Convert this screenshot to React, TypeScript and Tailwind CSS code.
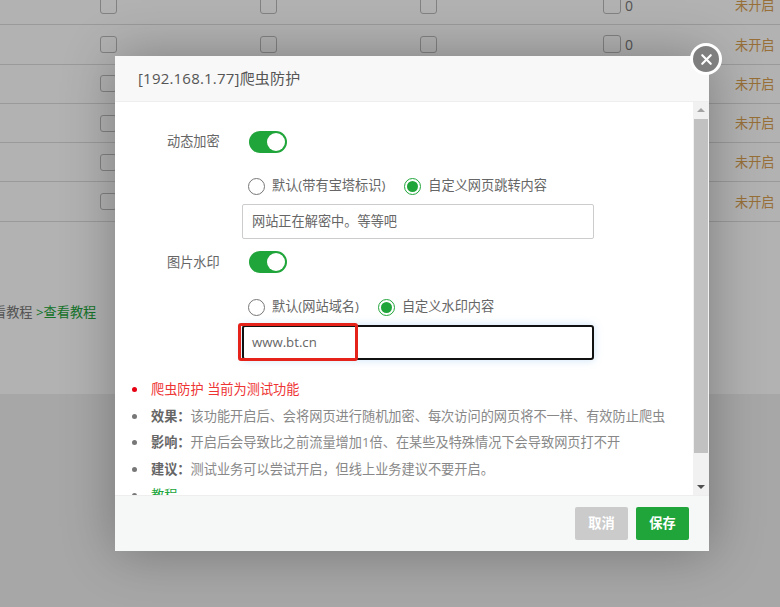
import React from 'react';
import { X } from 'lucide-react';

const rows = [0, 1, 2, 3, 4, 5];

const Box = () => <span className="block w-[17px] h-[17px] border border-[#bbb] rounded-[3px] bg-white" />;

const Toggle = () => (
  <span className="flex items-center justify-end w-[38px] h-[22px] rounded-full bg-[#20a53a] pr-[2px]">
    <span className="block w-[18px] h-[18px] rounded-full bg-white" />
  </span>
);

const Radio = ({ on, label }: { on?: boolean; label: string }) => (
  <span className="flex items-center gap-[7px]">
    {on ? (
      <span className="flex items-center justify-center w-[17px] h-[17px] rounded-full border border-[#20a53a] bg-white">
        <span className="block w-[11px] h-[11px] rounded-full bg-[#20a53a]" />
      </span>
    ) : (
      <span className="block w-[17px] h-[17px] rounded-full border border-[#777] bg-white" />
    )}
    <span>{label}</span>
  </span>
);

const Item = ({ bullet = 'bg-[#777]', children }: { bullet?: string; children: React.ReactNode }) => (
  <li className="relative h-[26.5px] leading-[26.5px] pl-[36px] whitespace-nowrap">
    <span className={`absolute left-[17px] top-[11px] w-[5px] h-[5px] rounded-full ${bullet}`} />
    {children}
  </li>
);

export default function App() {
  return (
    <div
      className="relative w-[780px] h-[607px] overflow-hidden bg-[#f0f0f0] text-[13.2px] text-[#666]"
      style={{ fontFamily: '"Open Sans", "Noto Sans CJK SC", sans-serif' }}
    >
      <div className="h-[394px] bg-white overflow-hidden">
        <div className="-mt-[14px]">
          {rows.map((r) => (
            <div key={r} className="flex items-center h-[39.3px] border-b border-[#ddd]">
              <div className="w-[100px]" />
              <div className="w-[160px]"><Box /></div>
              <div className="w-[160px]"><Box /></div>
              <div className="w-[183px]"><Box /></div>
              <div className="flex items-center gap-[4px] w-[132px]">
                <span className="block w-[18px] h-[18px] border border-[#bbb] rounded-[3px] bg-white" />
                <span className="text-[#777] text-[14px]">0</span>
              </div>
              <span className="text-[#d9a050] whitespace-nowrap relative top-[1px]">未开启</span>
            </div>
          ))}
        </div>
        <p className="mt-[81px] -ml-[7px] whitespace-nowrap text-[#777]">
          看教程 <span className="text-[#20a53a]">&gt;查看教程</span>
        </p>
      </div>

      {/* layer mask */}
      <div className="absolute inset-0 bg-black/30" />

      {/* dialog */}
      <div className="absolute left-[115px] top-[56px] w-[594px] h-[495px] flex flex-col bg-white shadow-[1px_1px_50px_rgba(0,0,0,0.3)]">
        <div className="h-[46px] shrink-0 flex items-center pl-[23px] text-[15px] tracking-[0.2px] text-[#555] bg-[#f8f8f8] border-b border-[#eee]">
          [192.168.1.77]爬虫防护
        </div>

        <div className="flex-1 flex min-h-0">
          <div className="flex-1 overflow-hidden relative">
            <div className="pt-[29px] pl-[52px]">
              <div className="flex items-center h-[22px]">
                <span className="w-[82px]">动态加密</span>
                <Toggle />
              </div>
              <div className="flex items-center gap-[19px] mt-[24px] ml-[81px] h-[18px]">
                <Radio label="默认(带有宝塔标识)" />
                <Radio on label="自定义网页跳转内容" />
              </div>
              <div className="flex items-center w-[352px] h-[35px] ml-[75px] mt-[9px] pl-[9px] rounded-[2px] border border-[#ccc]">
                网站正在解密中。等等吧
              </div>
              <div className="flex items-center h-[22px] mt-[12px]">
                <span className="w-[82px] pt-[2px]">图片水印</span>
                <Toggle />
              </div>
              <div className="flex items-center gap-[19px] mt-[25px] ml-[81px] h-[18px]">
                <Radio label="默认(网站域名)" />
                <Radio on label="自定义水印内容" />
              </div>
              <div className="relative w-[352px] h-[35px] ml-[75px] mt-[9px] pl-[8px] flex items-center rounded-[3px] border-2 border-[#111] shadow-[0_0_8px_rgba(102,175,233,0.35)]">
                www.bt.cn
                <span className="absolute -left-[6px] -top-[4px] w-[120px] h-[38px] rounded-[3px] border-[3px] border-[#e5231b]" />
              </div>
            </div>
            <ul className="mt-[16px] text-[#888]">
              <Item bullet="bg-[#e60012]"><span className="text-[#ee3333]">爬虫防护 当前为测试功能</span></Item>
              <Item><b className="font-bold text-[#666]">效果：</b>该功能开启后、会将网页进行随机加密、每次访问的网页将不一样、有效防止爬虫</Item>
              <Item><b className="font-bold text-[#666]">影响：</b>开启后会导致比之前流量增加1倍、在某些及特殊情况下会导致网页打不开</Item>
              <Item><b className="font-bold text-[#666]">建议：</b>测试业务可以尝试开启，但线上业务建议不要开启。</Item>
              <Item><span className="text-[#20a53a]">教程</span></Item>
            </ul>
          </div>

          {/* scrollbar */}
          <div className="w-[16px] shrink-0 flex flex-col items-center bg-[#f1f1f1]">
            <svg width="16" height="17" viewBox="0 0 16 17" className="shrink-0"><path d="M8 6l4 4H4z" fill="#a3a3a3" /></svg>
            <div className="w-[14px] h-[334px] bg-[#c1c1c1] shrink-0" />
            <div className="flex-1" />
            <svg width="16" height="17" viewBox="0 0 16 17" className="shrink-0"><path d="M8 11L4 7h8z" fill="#505050" /></svg>
          </div>
        </div>

        <div className="h-[56px] shrink-0 flex items-center justify-end gap-[8px] pr-[20px] bg-[#f6f8f8] border-t border-[#eee]">
          <button className="w-[53px] h-[33px] rounded-[2px] bg-[#cbcbcb] text-white font-bold">取消</button>
          <button className="w-[53px] h-[33px] rounded-[2px] bg-[#20a53a] text-white font-bold">保存</button>
        </div>

        <button className="absolute -right-[13px] -top-[13px] flex items-center justify-center w-[32px] h-[32px] rounded-full border-[3px] border-white bg-[#7f7f7f] text-white">
          <X size={17} strokeWidth={3} />
        </button>
      </div>
    </div>
  );
}
